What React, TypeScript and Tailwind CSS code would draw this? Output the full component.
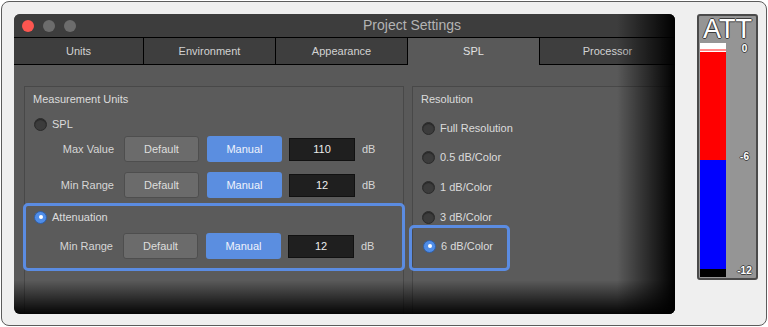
import React from 'react';

const font = { fontFamily: '"Liberation Sans", Arial, sans-serif' };

const Radio = ({ on }: { on?: boolean }) =>
  on ? (
    <span className="flex h-[13px] w-[13px] shrink-0 items-center justify-center rounded-full border border-[#2f5fa8] bg-[#4f8de8]">
      <span className="h-[4px] w-[4px] rounded-full bg-white" />
    </span>
  ) : (
    <span className="h-[13px] w-[13px] shrink-0 rounded-full border border-[#2a2a2a] bg-[#3c3c3c] shadow-[inset_0_1px_1px_rgba(0,0,0,0.4)]" />
  );

const ValueRow = ({ label, value, labelW }: { label: string; value: string; labelW: string }) => (
  <div className="flex h-[26px] items-center text-[11px]">
    <div className={`${labelW} text-right text-[#d6d6d6]`}>{label}</div>
    <button className="ml-[10px] h-[26px] w-[75px] rounded-[3px] border border-[#4e4e4e] bg-[#6b6b6b] text-[#dedede]">
      Default
    </button>
    <button className="ml-[8px] h-[26px] w-[75px] rounded-[3px] bg-[#5b8ee0] text-[#eef3fc]">Manual</button>
    <div className="ml-[7px] flex h-[23px] w-[66px] items-center justify-center border border-[#111] bg-[#1f1f1f] text-[#ececec]">
      {value}
    </div>
    <span className="ml-[7px] text-[#d6d6d6]">dB</span>
  </div>
);

const tabs = ['Units', 'Environment', 'Appearance', 'SPL', 'Processor'];

export default function App() {
  return (
    <div className="h-[327px] w-[768px] bg-white p-[1px]" style={font}>
      <div className="flex h-[325px] w-[766px] items-start rounded-[8px] border border-[#5c5c5c] bg-[#efefef] pl-[12px] pt-[12px]">
        {/* Window */}
        <div className="relative flex h-[300px] w-[661px] flex-col overflow-hidden rounded-[6px] bg-[#595959]">
          {/* Title bar */}
          <div className="flex h-[23px] shrink-0 items-center bg-[#3d3d3d] pl-[8px]">
            <span className="h-[12px] w-[12px] rounded-full bg-[#fc5650]" />
            <span className="ml-[9px] h-[12px] w-[12px] rounded-full bg-[#6c6c6c]" />
            <span className="ml-[9px] h-[12px] w-[12px] rounded-full bg-[#6c6c6c]" />
            <span className="ml-[287px] text-[14px] text-[#b4b4b4]">Project Settings</span>
          </div>
          {/* Tabs */}
          <div className="flex h-[28px] shrink-0 border-t border-black">
            {tabs.map((t, i) => {
              const sel = t === 'SPL';
              return (
                <div
                  key={t}
                  className={`flex h-full items-center justify-center text-[11px] ${
                    i === 0 ? 'w-[130px]' : 'w-[132px]'
                  } ${i < tabs.length - 1 ? 'border-r border-black' : 'flex-1'} ${
                    sel ? 'bg-[#595959] text-[#e2e2e2]' : 'border-b border-b-black bg-[#3e3e3e] text-[#d2d2d2]'
                  }`}
                >
                  {t}
                </div>
              );
            })}
          </div>
          {/* Content */}
          <div className="flex flex-1 gap-[8px] pl-[10px] pt-[21px]">
            {/* Measurement Units */}
            <div className="h-[260px] w-[380px] shrink-0 border border-[#484848] bg-[#5b5b5b] pt-[6px]">
              <div className="pl-[8px] text-[11px] leading-[13px] text-[#dcdcdc]">Measurement Units</div>
              <div className="ml-[9px] mt-[11px] flex h-[14px] items-center gap-[5px] text-[11px] text-[#dcdcdc]">
                <Radio />
                <span>SPL</span>
              </div>
              <div className="mt-[5px]">
                <ValueRow label="Max Value" value="110" labelW="w-[89px]" />
              </div>
              <div className="mt-[10px]">
                <ValueRow label="Min Range" value="12" labelW="w-[89px]" />
              </div>
              <div className="-mx-[2px] mt-[5px] rounded-[5px] border-[3px] border-[#5b8ce2] pb-[9px] pt-[4px]">
                <div className="ml-[8px] flex h-[14px] items-center gap-[5px] text-[11px] text-[#dcdcdc]">
                  <Radio on />
                  <span>Attenuation</span>
                </div>
                <div className="mt-[9px]">
                  <ValueRow label="Min Range" value="12" labelW="w-[87px]" />
                </div>
              </div>
            </div>
            {/* Resolution */}
            <div className="h-[260px] flex-1 border border-[#484848] bg-[#5b5b5b] pt-[6px]">
              <div className="pl-[8px] text-[11px] leading-[13px] text-[#dcdcdc]">Resolution</div>
              {['Full Resolution', '0.5 dB/Color', '1 dB/Color', '3 dB/Color'].map((r, i) => (
                <div
                  key={r}
                  className={`ml-[9px] flex h-[14px] items-center gap-[5px] text-[11px] text-[#dcdcdc] ${
                    i < 2 ? 'mt-[15px]' : 'mt-[16px]'
                  }`}
                >
                  <Radio />
                  <span>{r}</span>
                </div>
              ))}
              <div className="-ml-[4px] mt-[1px] w-[101px] rounded-[5px] border-[3px] border-[#5b8ce2] pb-[15px] pl-[11px] pt-[11px]">
                <div className="flex h-[14px] items-center gap-[5px] text-[11px] text-[#dcdcdc]">
                  <Radio on />
                  <span>6 dB/Color</span>
                </div>
              </div>
            </div>
          </div>
          {/* Vignette */}
          <div className="pointer-events-none absolute bottom-0 left-0 right-0 h-[34px] bg-linear-to-b from-transparent to-black/95" />
          <div className="pointer-events-none absolute bottom-0 right-0 top-0 w-[58px] bg-linear-to-r from-transparent to-black" />
        </div>

        {/* ATT meter */}
        <div className="ml-[22px] flex h-[266px] w-[61px] flex-col rounded-[3px] border-2 border-[#4a4a4a] bg-[#959595]">
          <div className="flex h-[27px] items-center justify-center text-[27px] leading-[27px] text-white [text-shadow:1px_0_#3c3c3c,-1px_0_#3c3c3c,0_1px_#3c3c3c,0_-1px_#3c3c3c]">
            ATT
          </div>
          <div className="flex flex-1">
            <div className="ml-[1px] flex w-[26px] flex-col">
              <div className="h-[6px] bg-white" />
              <div className="h-[2px] bg-[#ff8a8a]" />
              <div className="h-[1px] bg-white" />
              <div className="h-[108px] bg-[#ff0000]" />
              <div className="h-[109px] bg-[#0000ff]" />
              <div className="h-[8px] bg-black" />
            </div>
            <div className="flex flex-1 flex-col items-center pl-[7px] text-[10px] font-bold leading-[10px] text-white [text-shadow:1px_0_#444,-1px_0_#444,0_1px_#444,0_-1px_#444]">
              <span className="mt-[1px]">0</span>
              <span className="mt-[98px]">-6</span>
              <span className="mt-[104px]">-12</span>
            </div>
          </div>
        </div>
      </div>
    </div>
  );
}
